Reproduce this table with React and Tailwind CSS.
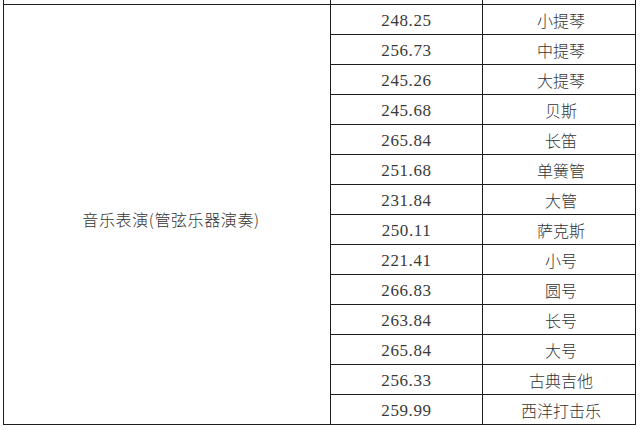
import React from "react";

const rows = [
  ["248.25", "小提琴"],
  ["256.73", "中提琴"],
  ["245.26", "大提琴"],
  ["245.68", "贝斯"],
  ["265.84", "长笛"],
  ["251.68", "单簧管"],
  ["231.84", "大管"],
  ["250.11", "萨克斯"],
  ["221.41", "小号"],
  ["266.83", "圆号"],
  ["263.84", "长号"],
  ["265.84", "大号"],
  ["256.33", "古典吉他"],
  ["259.99", "西洋打击乐"],
];

const cell = "border border-[#1c1c1c] p-0 text-center align-middle";

export default function App() {
  return (
    <div className="relative h-[430px] w-[640px] overflow-hidden bg-white">
      <table
        className="-mt-[26px] ml-[3px] table-fixed border-collapse text-[16px] text-[#333]"
        style={{ width: 633 }}
      >
        <colgroup>
          <col className="w-[327px]" />
          <col className="w-[152px]" />
          <col className="w-[153px]" />
        </colgroup>
        <tbody>
          <tr className="h-[30px]">
            <td className={cell} />
            <td className={cell} />
            <td className={cell} />
          </tr>
          {rows.map(([score, name], i) => (
            <tr key={name} className="h-[30px]">
              {i === 0 && (
                <td
                  rowSpan={rows.length}
                  className={`${cell} pl-[8px] pt-[8px] font-['Noto_Sans_CJK_SC',sans-serif] font-light text-[16px] tracking-[0.6px]`}
                >
                  音乐表演(管弦乐器演奏)
                </td>
              )}
              <td className={`${cell} pt-[2px] font-['Liberation_Serif',serif] text-[17px] tracking-[0.6px] text-[#3a3a3a]`}>
                {score}
              </td>
              <td className={`${cell} pl-[4px] pt-[1px] font-['Noto_Sans_CJK_SC',sans-serif] font-light`}>
                {name}
              </td>
            </tr>
          ))}
        </tbody>
      </table>
    </div>
  );
}
